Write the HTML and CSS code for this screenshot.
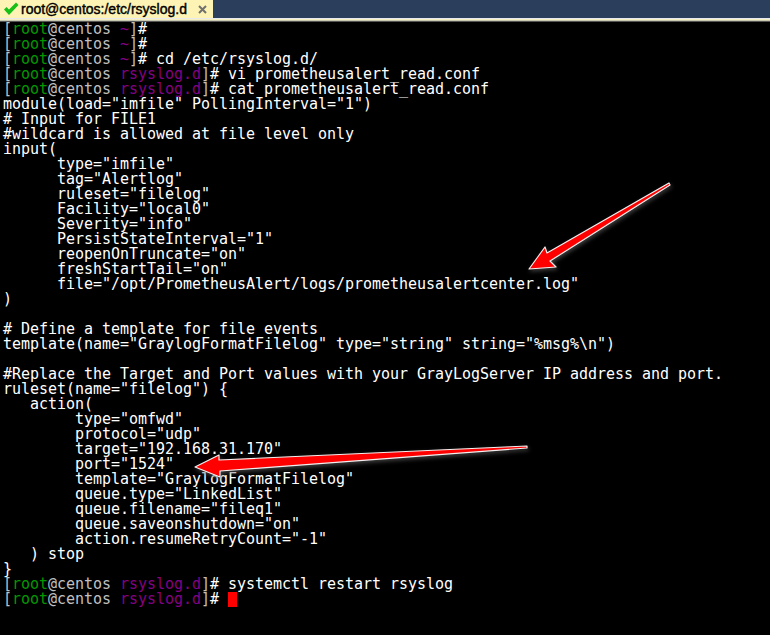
FILE: index.html
```html
<!DOCTYPE html>
<html lang="en">
<head>
<meta charset="utf-8">
<title>root@centos:/etc/rsyslog.d</title>
<link rel="stylesheet" href="styles.css">
</head>
<body>
<div class="window">
<div class="tabbar">
<div class="tab">
<svg class="check" width="18" height="16" viewBox="0 0 18 16"><path d="M2 8.5l2.5-2.5L7 8.5 14 1.5l2.5 2.5L7 14z" fill="#16c016"/></svg>
<span class="tab-title">root@centos:/etc/rsyslog.d</span>
<svg class="tab-close" width="9" height="9" viewBox="0 0 9 9"><path d="M1 1l7 7M8 1L1 8" stroke="#707070" stroke-width="2" fill="none"/></svg>
</div>
</div>
<div class="stripe"></div>
<pre class="terminal"><span class="g">[</span><span class="u">root</span><span class="g">@centos </span><span class="p">~</span><span class="g">]</span># 
<span class="g">[</span><span class="u">root</span><span class="g">@centos </span><span class="p">~</span><span class="g">]</span># 
<span class="g">[</span><span class="u">root</span><span class="g">@centos </span><span class="p">~</span><span class="g">]</span># cd /etc/rsyslog.d/
<span class="g">[</span><span class="u">root</span><span class="g">@centos </span><span class="p">rsyslog.d</span><span class="g">]</span># vi prometheusalert_read.conf
<span class="g">[</span><span class="u">root</span><span class="g">@centos </span><span class="p">rsyslog.d</span><span class="g">]</span># cat prometheusalert_read.conf
module(load="imfile" PollingInterval="1")
# Input for FILE1
#wildcard is allowed at file level only
input(
      type="imfile"
      tag="Alertlog"
      ruleset="filelog"
      Facility="local0"
      Severity="info"
      PersistStateInterval="1"
      reopenOnTruncate="on"
      freshStartTail="on"
      file="/opt/PrometheusAlert/logs/prometheusalertcenter.log"
)

# Define a template for file events
template(name="GraylogFormatFilelog" type="string" string="%msg%\n")

#Replace the Target and Port values with your GrayLogServer IP address and port.
ruleset(name="filelog") {
   action(
        type="omfwd"
        protocol="udp"
        target="192.168.31.170"
        port="1524"
        template="GraylogFormatFilelog"
        queue.type="LinkedList"
        queue.filename="fileq1"
        queue.saveonshutdown="on"
        action.resumeRetryCount="-1"
   ) stop
}
<span class="g">[</span><span class="u">root</span><span class="g">@centos </span><span class="p">rsyslog.d</span><span class="g">]</span># systemctl restart rsyslog
<span class="g">[</span><span class="u">root</span><span class="g">@centos </span><span class="p">rsyslog.d</span><span class="g">]</span># <span class="cursor"> </span></pre>
<svg class="arrows" width="770" height="635" viewBox="0 0 770 635">
<polygon class="arrow" points="670,185 550,261 556,267 529,269 545,247 547,253 669,183"/>
<polygon class="arrow" points="527,448 220,471 220,477 195,467 219,455 219,460 527,446"/>
</svg>
</div>
</body>
</html>
```
FILE: styles.css
```css
html, body {
  margin: 0;
  padding: 0;
  background: #000;
}
.window {
  position: relative;
  width: 770px;
  height: 635px;
  overflow: hidden;
  background: #000;
}
.tabbar {
  display: flex;
  height: 18px;
  background: #2b3f5c;
}
.tab {
  display: flex;
  align-items: center;
  width: 213px;
  height: 18px;
  box-sizing: border-box;
  padding-left: 2px;
  background: #fdf3b4;
  font-family: "Liberation Sans", sans-serif;
  font-size: 14px;
  line-height: 16px;
  color: #000;
  -webkit-text-stroke: 0.4px #000;
}
.check {
  flex: none;
}
.tab-title {
  margin-left: 1px;
  flex: 1;
  white-space: nowrap;
}
.tab-close {
  flex: none;
  margin-right: 6px;
}
.stripe {
  height: 4px;
  background: linear-gradient(#e8e8f0 0 25%, #f5efc0 25% 50%, #c8c8b0 50% 75%, #555 75%);
}
.terminal {
  margin: 0;
  padding: 0 0 0 3px;
  font-family: "DejaVu Sans Mono", monospace;
  font-size: 15px;
  line-height: 15px;
  letter-spacing: -0.03px;
  color: #fff;
  background: #000;
}
.g, .u, .p {
  display: inline-block;
  white-space: pre;
}
.g { color: #c0c0c0; }
.u { color: #009a00; }
.p { color: #850085; }
.cursor {
  display: inline-block;
  width: 9px;
  height: 15px;
  background: #f00;
  vertical-align: top;
}
.arrows {
  position: absolute;
  left: 0;
  top: 0;
  pointer-events: none;
  filter: drop-shadow(1px 2px 2px rgba(90, 90, 90, 0.7));
}
.arrow {
  fill: #f00;
  stroke: #f4eeee;
  stroke-width: 1.2;
  stroke-linejoin: round;
}
```
